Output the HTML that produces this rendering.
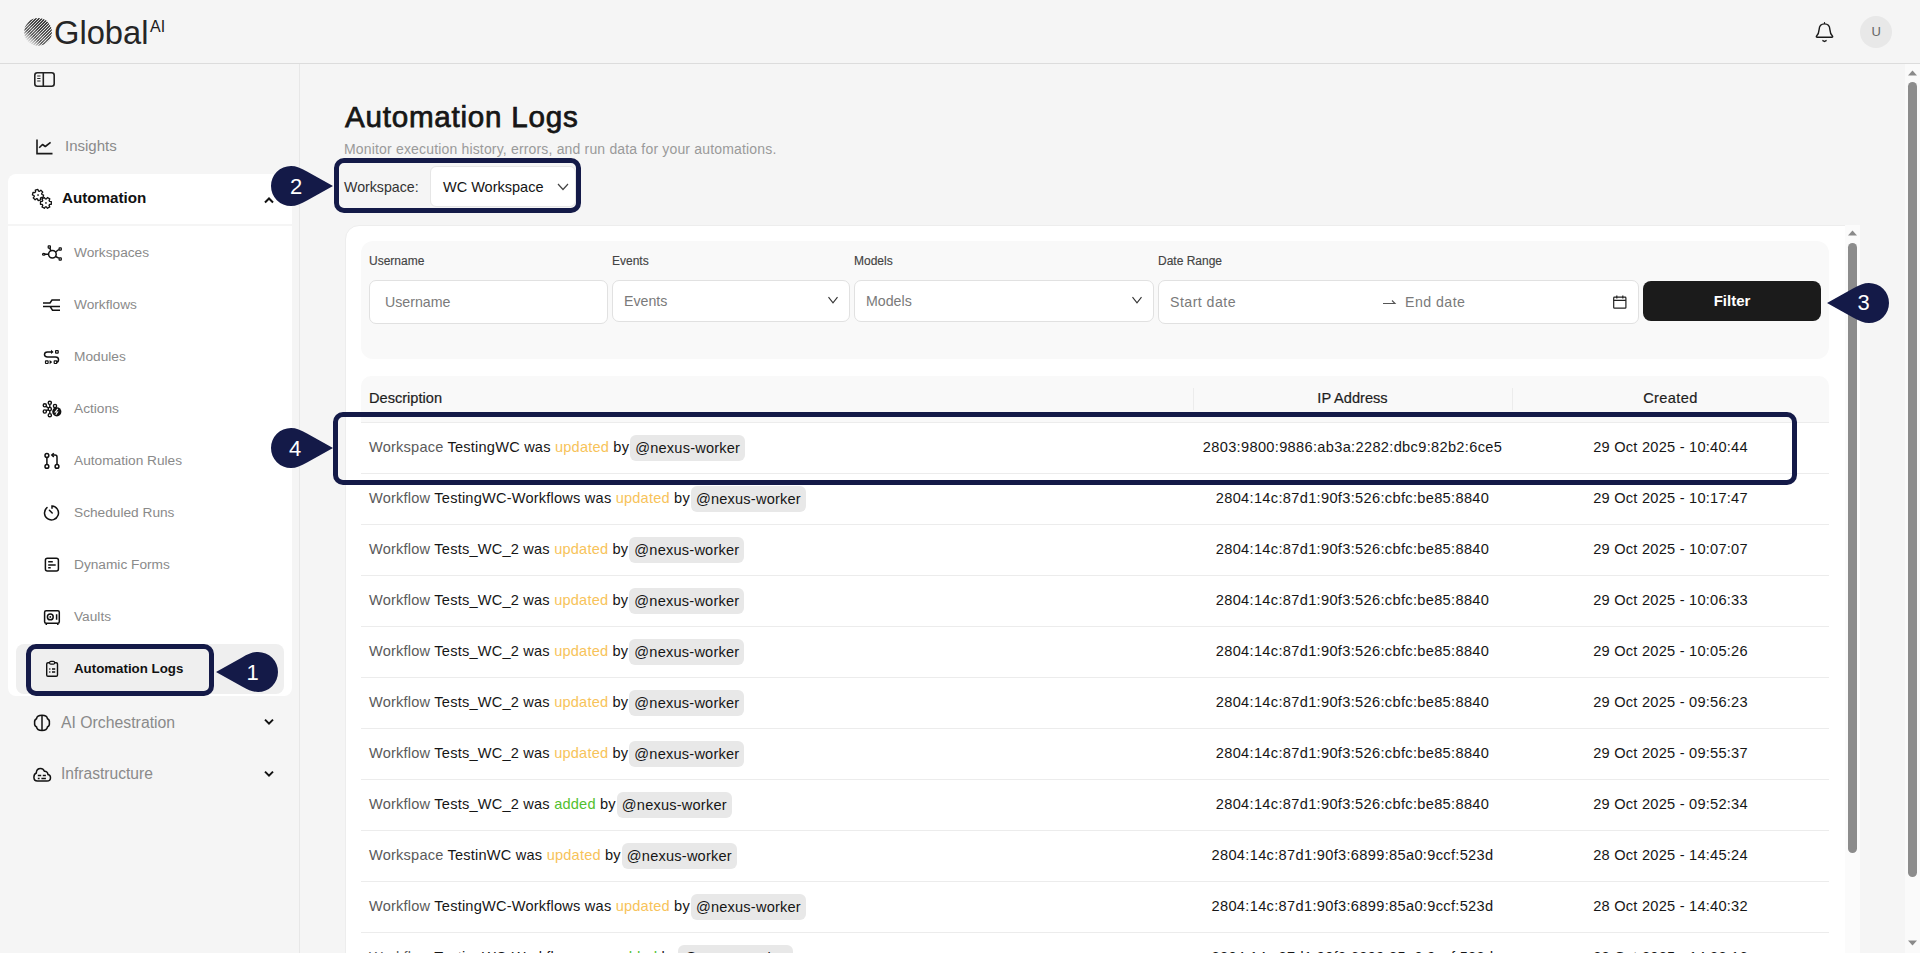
<!DOCTYPE html>
<html><head><meta charset="utf-8">
<style>
*{box-sizing:border-box;margin:0;padding:0}
html,body{width:1920px;height:953px;overflow:hidden;background:#f5f5f5;font-family:"Liberation Sans",sans-serif;color:#111}
.t{position:absolute;white-space:nowrap;line-height:1}
#hdr{position:absolute;left:0;top:0;width:1920px;height:64px;border-bottom:1px solid #dcdcdc}
#side{position:absolute;left:0;top:64px;width:300px;height:889px;border-right:1px solid #e7e7e7}
.bx{position:absolute}
.ann{position:absolute;border:5px solid #141a48;border-radius:10px;z-index:5}
.bdg{z-index:6}
.bnum{z-index:7}
svg{position:absolute;overflow:visible}
.si{font-size:13.7px;color:#8a8a8a}
.sm{font-size:15.5px;color:#8a8a8a}
.fl{font-size:12px;color:#444;-webkit-text-stroke:0.15px #444}
.inp{background:#fff;border:1px solid #e1e1e1;border-radius:7px}
.ph{font-size:14.2px;color:#7a7a7a}
.th{font-size:14.6px;color:#1e1e1e;-webkit-text-stroke:0.2px #1e1e1e}
.row{position:absolute;left:361px;width:1468px;height:51px;border-bottom:1px solid #ececec}
.desc{position:absolute;left:8px;top:-1px;height:51px;line-height:51px;font-size:14.6px;letter-spacing:0.2px;color:#161616;white-space:nowrap}
.desc .g{color:#5a5a5a}
.desc .up{color:#f7c35a}
.desc .ad{color:#52bf2e}
.pill{display:inline-block;background:#e8e8e8;border-radius:6px;height:26px;line-height:26px;padding:0 5px;margin-left:1px;vertical-align:middle;position:relative;top:0px}
.ip{position:absolute;left:832px;width:319px;top:-1px;height:51px;line-height:51px;text-align:center;font-size:14.6px;letter-spacing:0.33px;color:#161616;white-space:nowrap}
.dt{position:absolute;left:1151px;width:317px;top:-1px;height:51px;line-height:51px;text-align:center;font-size:14.6px;letter-spacing:0.24px;color:#161616;white-space:nowrap}
</style></head>
<body>
<div id="hdr"></div>
<div id="side"></div>

<!-- logo -->
<svg style="left:23.5px;top:17.5px" width="28" height="28" viewBox="0 0 28 28">
  <defs><clipPath id="gc"><circle cx="14" cy="14" r="13.9"/></clipPath>
  <linearGradient id="gg" gradientUnits="userSpaceOnUse" x1="22" y1="5" x2="5" y2="24"><stop offset="0" stop-color="#111"/><stop offset="0.4" stop-color="#1e1e1e"/><stop offset="0.55" stop-color="#555"/><stop offset="0.7" stop-color="#333"/><stop offset="0.85" stop-color="#999"/><stop offset="1" stop-color="#dcdcdc"/></linearGradient></defs>
  <g clip-path="url(#gc)" stroke="url(#gg)" stroke-width="1.15">
    <path d="M0.50 0L0 0.50 M3.50 0L0 3.50 M6.50 0L0 6.50 M9.50 0L0 9.50 M12.50 0L0 12.50 M15.50 0L0 15.50 M18.50 0L0 18.50 M21.50 0L0 21.50 M24.50 0L0 24.50 M27.50 0L0 27.50 M30.50 0L0 30.50 M33.50 0L0 33.50 M36.50 0L0 36.50 M39.50 0L0 39.50 M42.50 0L0 42.50 M45.50 0L0 45.50 M48.50 0L0 48.50 M51.50 0L0 51.50 M54.50 0L0 54.50"/>
  </g>
</svg>
<div class="t" style="left:54px;top:17px;font-size:32.7px;color:#262626">Global</div>
<div class="t" style="left:150px;top:19px;font-size:16px;color:#1c1c1c">AI</div>

<!-- bell -->
<svg style="left:1815px;top:21px" width="19" height="22" viewBox="0 0 19 22">
  <path d="M9.5 2.9C6.2 2.9 4.3 5.3 4.1 8.6C3.9 11.6 3.7 12.9 1.6 15C1 15.7 1.4 16.3 2.2 16.3H16.8C17.6 16.3 18 15.7 17.4 15C15.3 12.9 15.1 11.6 14.9 8.6C14.7 5.3 12.8 2.9 9.5 2.9Z" fill="none" stroke="#1a1a1a" stroke-width="1.4"/>
  <path d="M7.4 19.3L9.5 20.5L11.6 19.3" fill="none" stroke="#1a1a1a" stroke-width="1.4"/>
  <path d="M9.5 1.1L9.5 3" stroke="#1a1a1a" stroke-width="1.1"/>
</svg>
<div class="bx" style="left:1860px;top:16px;width:32px;height:32px;border-radius:50%;background:#e8e8e8"></div>
<div class="t" style="left:1871.5px;top:25px;font-size:13px;color:#666">U</div>

<!-- sidebar toggle -->
<svg style="left:34px;top:72px" width="21" height="15" viewBox="0 0 21 15">
  <rect x="0.8" y="0.8" width="19.4" height="13.4" rx="2.5" fill="none" stroke="#222" stroke-width="1.6"/>
  <path d="M9.3 1V14" stroke="#222" stroke-width="1.6"/>
  <path d="M3.2 4H6.5M3.2 6.5H6.5M3.2 9H6.5" stroke="#222" stroke-width="1.1"/>
</svg>

<!-- insights -->
<svg style="left:36px;top:139px" width="17" height="16" viewBox="0 0 17 16">
  <path d="M1 0.5V14.6H16.5" fill="none" stroke="#1a1a1a" stroke-width="1.6"/>
  <path d="M3.2 8.8L6.5 5.5L9.3 7.5L14.6 3.4" fill="none" stroke="#1a1a1a" stroke-width="1.6" stroke-linejoin="round"/>
</svg>
<div class="t sm" style="left:65px;top:137.8px;font-size:15px">Insights</div>

<!-- automation group -->
<div class="bx" style="left:8px;top:174px;width:284px;height:50px;background:#fff;border-radius:8px 8px 0 0"></div>
<div class="bx" style="left:8px;top:226px;width:284px;height:470px;background:#fff;border-radius:0 0 8px 8px"></div>
<svg style="left:28px;top:185px" width="28" height="28" viewBox="28 185 28 28">
  <g fill="none" stroke="#111" stroke-width="1.3" stroke-linejoin="round">
  <path d="M43.60 195.10 L42.90 197.71 L41.19 197.41 L40.41 198.19 L40.71 199.90 L38.10 200.60 L37.51 198.97 L36.44 198.68 L35.12 199.80 L33.20 197.88 L34.32 196.56 L34.03 195.49 L32.40 194.90 L33.10 192.29 L34.81 192.59 L35.59 191.81 L35.29 190.10 L37.90 189.40 L38.49 191.03 L39.56 191.32 L40.88 190.20 L42.80 192.12 L41.68 193.44 L41.97 194.51Z"/>
  <path d="M51.33 201.55 L51.33 204.25 L49.61 204.40 L49.05 205.36 L49.79 206.93 L47.44 208.28 L46.46 206.86 L45.34 206.86 L44.36 208.28 L42.01 206.93 L42.75 205.36 L42.19 204.40 L40.47 204.25 L40.47 201.55 L42.19 201.40 L42.75 200.44 L42.01 198.87 L44.36 197.52 L45.34 198.94 L46.46 198.94 L47.44 197.52 L49.79 198.87 L49.05 200.44 L49.61 201.40Z"/>
  </g>
  <rect x="37.3" y="194.3" width="1.5" height="1.5" fill="#111"/>
  <rect x="45.2" y="202.2" width="1.5" height="1.5" fill="#111"/>
</svg>
<div class="t" style="left:62px;top:190px;font-size:15.2px;font-weight:bold;color:#111">Automation</div>
<svg style="left:264px;top:197px" width="10" height="7" viewBox="0 0 10 7"><path d="M1 5.5L5 1.5L9 5.5" fill="none" stroke="#111" stroke-width="2"/></svg>

<!-- submenu icons -->
<svg style="left:42px;top:245px" width="20" height="16" viewBox="42 245 20 16">
  <g fill="none" stroke="#111" stroke-width="1.5">
    <circle cx="52.4" cy="254.3" r="3.8"/>
    <path d="M44.5 254.3H48.6M49.8 247.8L50.8 251M58.8 249.5L55.6 252M58.8 258.2L55.6 256.5"/>
  </g><g fill="none" stroke="#111" stroke-width="1.2">
    <rect x="48.2" y="245.9" width="2.2" height="2.2" rx="0.4"/>
    <rect x="59.1" y="247.9" width="2.2" height="2.2" rx="0.4"/>
    <rect x="59.1" y="257.9" width="2.2" height="2.2" rx="0.4"/>
    <ellipse cx="43.8" cy="254.3" rx="1.3" ry="0.9"/>
  </g>
</svg>
<div class="t si" style="left:74px;top:246px">Workspaces</div>

<svg style="left:42px;top:298px" width="20" height="14" viewBox="42 298 20 14">
  <g fill="none" stroke="#111" stroke-width="1.5">
    <path d="M43 303H50L52 300H60M43 306.4H60M50 306.4L52.5 310.2H60"/>
  </g>
</svg>
<div class="t si" style="left:74px;top:298px">Workflows</div>

<svg style="left:43px;top:349px" width="18" height="17" viewBox="43 349 18 17">
  <g fill="none" stroke="#111" stroke-width="1.5">
    <path d="M51.5 351.9H47.5C45 351.9 44.5 353.5 44.5 354.5C44.5 356 45.5 356.9 47.5 356.9H55.5C57.5 356.9 58.5 358 58.5 359.5C58.5 361 57.5 362.3 56.3 362.3"/>
  </g><g fill="none" stroke="#111" stroke-width="1.2">
    <rect x="55.6" y="350.6" width="2.6" height="2.6" rx="0.4"/>
    <rect x="45.5" y="360.9" width="2.6" height="2.6" rx="0.4"/>
    <rect x="54.2" y="360.9" width="2.6" height="2.6" rx="0.4"/>
  </g>
  <path d="M51 349.8L53.6 351.9L51 354Z M49.6 360L52.2 362.1L49.6 364.2Z" fill="#111"/>
</svg>
<div class="t si" style="left:74px;top:350px">Modules</div>

<svg style="left:42px;top:400px" width="20" height="18" viewBox="42 400 20 18">
  <g fill="none" stroke="#111" stroke-width="1.4">
    <circle cx="49.8" cy="402.8" r="1.6"/>
    <circle cx="44.8" cy="405.3" r="1.6"/>
    <circle cx="44.8" cy="411.5" r="1.6"/>
    <circle cx="49.8" cy="409" r="1.6"/>
    <circle cx="49.8" cy="415.2" r="1.6"/>
    <circle cx="55" cy="406" r="1.6"/>
    <path d="M49.8 404.4V407.4M49.8 410.6V413.6M46 406.3L48.5 408M46 410.5L48.5 409.8"/>
  </g>
  <circle cx="56.8" cy="411.8" r="4.6" fill="#111"/>
  <path d="M57.8 408.8L55.3 412H57.6L55.8 414.8" fill="none" stroke="#fff" stroke-width="1.1"/>
</svg>
<div class="t si" style="left:74px;top:402px">Actions</div>

<svg style="left:43px;top:451px" width="18" height="19" viewBox="43 451 18 19">
  <g fill="none" stroke="#111" stroke-width="1.5">
    <circle cx="46.9" cy="455.5" r="1.9"/>
    <circle cx="46.9" cy="466.4" r="1.9"/>
    <circle cx="57" cy="466.4" r="1.9"/>
    <path d="M46.9 457.4V464.5M57 464.5V457C57 455.7 56.3 455.1 55 455.1H52.2"/>
    <path d="M53.8 453.2L51.8 455.1L53.8 457"/>
  </g>
</svg>
<div class="t si" style="left:74px;top:454px">Automation Rules</div>

<svg style="left:44px;top:505px" width="16" height="16" viewBox="44 505 16 16">
  <g fill="none" stroke="#111" stroke-width="1.5" stroke-linecap="round">
    <path d="M47 507.6A7 7 0 1 0 52 506V508.3"/>
    <path d="M49.4 510.2L52.2 513"/>
  </g>
</svg>
<div class="t si" style="left:74px;top:506px">Scheduled Runs</div>

<svg style="left:44px;top:557px" width="16" height="16" viewBox="44 557 16 16">
  <rect x="45.4" y="558.3" width="13" height="12.8" rx="2" fill="none" stroke="#111" stroke-width="1.5"/>
  <path d="M48.2 561.8H52.8M48.2 565H55.7M48.2 567.8H50.7" stroke="#111" stroke-width="1.4"/>
</svg>
<div class="t si" style="left:74px;top:558px">Dynamic Forms</div>

<svg style="left:43px;top:609px" width="18" height="17" viewBox="43 609 18 17">
  <rect x="44.6" y="610.7" width="14.7" height="12.6" rx="1.5" fill="none" stroke="#111" stroke-width="1.5"/>
  <circle cx="50.3" cy="616.9" r="2.9" fill="none" stroke="#111" stroke-width="1.5"/><circle cx="50.3" cy="616.9" r="0.9" fill="#111"/>
  <path d="M56.6 614.2V619.8M46.3 623.5V625M57.8 623.5V625" stroke="#111" stroke-width="1.5"/>
</svg>
<div class="t si" style="left:74px;top:610px">Vaults</div>

<!-- active -->
<div class="bx" style="left:16px;top:644px;width:268px;height:50px;background:#efefef;border-radius:8px"></div>
<svg style="left:45px;top:660px" width="14" height="18" viewBox="45 660 14 18">
  <rect x="46.7" y="662.7" width="10.8" height="13.6" rx="1.3" fill="none" stroke="#111" stroke-width="1.4"/>
  <rect x="49.6" y="661.4" width="5" height="2.8" rx="1.2" fill="#efefef" stroke="#111" stroke-width="1.2"/>
  <path d="M49.2 669H50.4M52 669H55.2M49.2 672H50.4M52 672H55.2" stroke="#111" stroke-width="1.3"/>
</svg>
<div class="t" style="left:74px;top:662px;font-size:13.3px;font-weight:bold;color:#111">Automation Logs</div>

<svg style="left:33px;top:714px" width="18" height="18" viewBox="33 714 18 18">
  <g fill="none" stroke="#111" stroke-width="1.5">
    <path d="M42 715.3C38.5 715.3 36.8 716.8 36.5 718.8C35 719.4 34.4 721 34.6 722.8C34.4 724.6 35 726.3 36.5 726.9C36.8 729 38.5 730.5 42 730.5C45.5 730.5 47.2 729 47.5 726.9C49 726.3 49.6 724.6 49.4 722.8C49.6 721 49 719.4 47.5 718.8C47.2 716.8 45.5 715.3 42 715.3Z"/>
    <path d="M42 715.3V730.5"/>
  </g>
</svg>
<div class="t sm" style="left:61px;top:714.5px;font-size:15.8px">AI Orchestration</div>
<svg style="left:264px;top:718px" width="10" height="8" viewBox="0 0 10 8"><path d="M1 1.6L5 5.6L9 1.6" fill="none" stroke="#111" stroke-width="2"/></svg>

<svg style="left:33px;top:767px" width="19" height="16" viewBox="33 767 19 16">
  <g fill="none" stroke="#111" stroke-width="1.5">
    <path d="M37.5 781.1H47C49.2 781.1 50.5 779.7 50.5 777.8C50.5 776.2 49.5 774.9 48 774.6C47.8 772.3 46.2 771 44.4 771.2C43.6 769.5 42.2 768.6 40.6 768.6C38.2 768.6 36.4 770.5 36.3 773C34.8 773.6 33.9 775.3 33.9 777.3C33.9 779.5 35.4 781.1 37.5 781.1Z"/>
    <path d="M37.8 775.6H41.2M42.8 775.6H45.9M37.8 778.5H39.6M41.4 778.5H45.9"/>
  </g>
</svg>
<div class="t sm" style="left:61px;top:766px;font-size:15.6px">Infrastructure</div>
<svg style="left:264px;top:770px" width="10" height="8" viewBox="0 0 10 8"><path d="M1 1.6L5 5.6L9 1.6" fill="none" stroke="#111" stroke-width="2"/></svg>

<!-- MAIN -->
<!-- title -->
<div class="t" style="left:345px;top:102px;font-size:29.6px;letter-spacing:0.76px;font-weight:normal;-webkit-text-stroke:0.75px #161616;color:#161616">Automation Logs</div>
<div class="t" style="left:344px;top:142px;font-size:14px;letter-spacing:0.17px;color:#9a9a9a">Monitor execution history, errors, and run data for your automations.</div>
<div class="t" style="left:344px;top:180px;font-size:14.2px;color:#333">Workspace:</div>
<div class="bx" style="left:430px;top:166px;width:146px;height:41px;background:#fff;border:1px solid #e6e6e6;border-radius:6px"></div>
<div class="t" style="left:443px;top:180px;font-size:14.5px;color:#141414">WC Workspace</div>
<svg style="left:557px;top:183px" width="12" height="8" viewBox="0 0 12 8"><path d="M1 1L6 6.5L11 1" fill="none" stroke="#444" stroke-width="1.2"/></svg>
<div class="ann" style="left:334px;top:158px;width:247px;height:55px"></div>
<!-- badge 2 -->
<svg class="bdg" style="left:271px;top:166px" width="63" height="40" viewBox="0 0 63 40"><path d="M20 0C25 0 30 2 36 5.5L62 20L36 34.5C30 38 25 40 20 40A20 20 0 0 1 20 0Z" fill="#141a48"/></svg>
<div class="t" style="left:284px;top:176px;width:24px;text-align:center;font-size:22px;color:#fff;z-index:7">2</div>

<!-- card -->
<div class="bx" style="left:345px;top:225px;width:1515px;height:760px;background:#fff;border:1px solid #ededed;border-radius:14px"></div>
<!-- filter panel -->
<div class="bx" style="left:361px;top:241px;width:1468px;height:118px;background:#f9f9f9;border-radius:12px"></div>
<div class="t fl" style="left:369px;top:255px">Username</div>
<div class="t fl" style="left:612px;top:255px">Events</div>
<div class="t fl" style="left:854px;top:255px">Models</div>
<div class="t fl" style="left:1158px;top:255px">Date Range</div>

<div class="bx inp" style="left:369px;top:280px;width:239px;height:44px"></div>
<div class="t ph" style="left:385px;top:295px">Username</div>
<div class="bx inp" style="left:612px;top:280px;width:238px;height:42px"></div>
<div class="t ph" style="left:624px;top:294px">Events</div>
<svg style="left:827px;top:296px" width="12" height="9" viewBox="0 0 12 9"><path d="M1.5 1.2L6 6.8L10.5 1.2" fill="none" stroke="#333" stroke-width="1.15"/></svg>
<div class="bx inp" style="left:854px;top:280px;width:300px;height:42px"></div>
<div class="t ph" style="left:866px;top:294px">Models</div>
<svg style="left:1131px;top:296px" width="12" height="9" viewBox="0 0 12 9"><path d="M1.5 1.2L6 6.8L10.5 1.2" fill="none" stroke="#333" stroke-width="1.15"/></svg>
<div class="bx inp" style="left:1158px;top:280px;width:481px;height:44px"></div>
<div class="t ph" style="left:1170px;top:295px;letter-spacing:0.45px">Start date</div>
<svg style="left:1382px;top:299px" width="14" height="6" viewBox="0 0 14 6"><path d="M1 4.5H13L10 1.5" fill="none" stroke="#555" stroke-width="1.1"/></svg>
<div class="t ph" style="left:1405px;top:295px;letter-spacing:0.45px">End date</div>
<svg style="left:1613px;top:295px" width="14" height="14" viewBox="0 0 14 14">
  <rect x="0.7" y="2.2" width="12.2" height="11" rx="0.8" fill="none" stroke="#222" stroke-width="1.2"/>
  <path d="M0.7 5.3H12.9M3.8 0.5V3.5M9.8 0.5V3.5" stroke="#222" stroke-width="1.2"/>
</svg>
<div class="bx" style="left:1643px;top:281px;width:178px;height:40px;background:#1b1b1b;border-radius:8px"></div>
<div class="t" style="left:1643px;top:293px;width:178px;text-align:center;font-size:15px;font-weight:bold;color:#fff">Filter</div>
<!-- badge 3 -->
<svg class="bdg" style="left:1826px;top:283px" width="63" height="40" viewBox="0 0 63 40"><path d="M43 0C38 0 33 2 27 5.5L1 20L27 34.5C33 38 38 40 43 40A20 20 0 0 0 43 0Z" fill="#141a48"/></svg>
<div class="t" style="left:1851.5px;top:292px;width:24px;text-align:center;font-size:22px;color:#fff;z-index:7">3</div>

<!-- table header -->
<div class="bx" style="left:361px;top:376px;width:1468px;height:47px;background:#f9f9f9;border-radius:10px 10px 0 0;border-bottom:1px solid #ececec"></div>
<div class="bx" style="left:1193px;top:388px;width:1px;height:22px;background:#ececec"></div>
<div class="bx" style="left:1512px;top:388px;width:1px;height:22px;background:#ececec"></div>
<div class="t th" style="left:369px;top:391px">Description</div>
<div class="t th" style="left:1193px;top:391px;width:319px;text-align:center">IP Address</div>
<div class="t th" style="left:1512px;top:391px;width:317px;text-align:center;letter-spacing:0.4px">Created</div>

<div class="row" style="top:423px"><div class="desc"><span class="g">Workspace</span> TestingWC was <span class="up">updated</span> by<span class="pill">@nexus-worker</span></div><div class="ip">2803:9800:9886:ab3a:2282:dbc9:82b2:6ce5</div><div class="dt">29 Oct 2025 - 10:40:44</div></div>
<div class="row" style="top:474px"><div class="desc"><span class="g">Workflow</span> TestingWC-Workflows was <span class="up">updated</span> by<span class="pill">@nexus-worker</span></div><div class="ip">2804:14c:87d1:90f3:526:cbfc:be85:8840</div><div class="dt">29 Oct 2025 - 10:17:47</div></div>
<div class="row" style="top:525px"><div class="desc"><span class="g">Workflow</span> Tests_WC_2 was <span class="up">updated</span> by<span class="pill">@nexus-worker</span></div><div class="ip">2804:14c:87d1:90f3:526:cbfc:be85:8840</div><div class="dt">29 Oct 2025 - 10:07:07</div></div>
<div class="row" style="top:576px"><div class="desc"><span class="g">Workflow</span> Tests_WC_2 was <span class="up">updated</span> by<span class="pill">@nexus-worker</span></div><div class="ip">2804:14c:87d1:90f3:526:cbfc:be85:8840</div><div class="dt">29 Oct 2025 - 10:06:33</div></div>
<div class="row" style="top:627px"><div class="desc"><span class="g">Workflow</span> Tests_WC_2 was <span class="up">updated</span> by<span class="pill">@nexus-worker</span></div><div class="ip">2804:14c:87d1:90f3:526:cbfc:be85:8840</div><div class="dt">29 Oct 2025 - 10:05:26</div></div>
<div class="row" style="top:678px"><div class="desc"><span class="g">Workflow</span> Tests_WC_2 was <span class="up">updated</span> by<span class="pill">@nexus-worker</span></div><div class="ip">2804:14c:87d1:90f3:526:cbfc:be85:8840</div><div class="dt">29 Oct 2025 - 09:56:23</div></div>
<div class="row" style="top:729px"><div class="desc"><span class="g">Workflow</span> Tests_WC_2 was <span class="up">updated</span> by<span class="pill">@nexus-worker</span></div><div class="ip">2804:14c:87d1:90f3:526:cbfc:be85:8840</div><div class="dt">29 Oct 2025 - 09:55:37</div></div>
<div class="row" style="top:780px"><div class="desc"><span class="g">Workflow</span> Tests_WC_2 was <span class="ad">added</span> by<span class="pill">@nexus-worker</span></div><div class="ip">2804:14c:87d1:90f3:526:cbfc:be85:8840</div><div class="dt">29 Oct 2025 - 09:52:34</div></div>
<div class="row" style="top:831px"><div class="desc"><span class="g">Workspace</span> TestinWC was <span class="up">updated</span> by<span class="pill">@nexus-worker</span></div><div class="ip">2804:14c:87d1:90f3:6899:85a0:9ccf:523d</div><div class="dt">28 Oct 2025 - 14:45:24</div></div>
<div class="row" style="top:882px"><div class="desc"><span class="g">Workflow</span> TestingWC-Workflows was <span class="up">updated</span> by<span class="pill">@nexus-worker</span></div><div class="ip">2804:14c:87d1:90f3:6899:85a0:9ccf:523d</div><div class="dt">28 Oct 2025 - 14:40:32</div></div>
<div class="row" style="top:933px"><div class="desc"><span class="g">Workflow</span> TestingWC-Workflows was <span class="ad">added</span> by<span class="pill">@nexus-worker</span></div><div class="ip">2804:14c:87d1:90f3:6899:85a0:9ccf:523d</div><div class="dt">28 Oct 2025 - 14:38:16</div></div>

<!-- annotation 4 -->
<div class="ann" style="left:333px;top:412px;width:1464px;height:73px"></div>
<svg class="bdg" style="left:271px;top:428px" width="63" height="40" viewBox="0 0 63 40"><path d="M20 0C25 0 30 2 36 5.5L62 20L36 34.5C30 38 25 40 20 40A20 20 0 0 1 20 0Z" fill="#141a48"/></svg>
<div class="t" style="left:283px;top:438px;width:24px;text-align:center;font-size:22px;color:#fff;z-index:7">4</div>

<!-- annotation 1 -->
<div class="ann" style="left:26px;top:644px;width:188px;height:52px"></div>
<svg class="bdg" style="left:216px;top:652px" width="62" height="40" viewBox="0 0 62 40"><path d="M42 0C37 0 32 2 26 5.5L0 20L26 34.5C32 38 37 40 42 40A20 20 0 0 0 42 0Z" fill="#141a48"/></svg>
<div class="t" style="left:240.5px;top:662px;width:24px;text-align:center;font-size:22px;color:#fff;z-index:7">1</div>

<!-- inner scrollbar -->
<div class="bx" style="left:1845px;top:225px;width:15px;height:728px;background:#fbfbfb"></div>
<svg style="left:1848px;top:230px" width="9" height="6" viewBox="0 0 9 6"><path d="M0 5.5L4.5 0.5L9 5.5Z" fill="#8a8a8a"/></svg>
<div class="bx" style="left:1848px;top:243px;width:9px;height:610px;background:#8c8c8c;border-radius:5px"></div>
<!-- page scrollbar -->
<div class="bx" style="left:1905px;top:64px;width:15px;height:889px;background:#fafafa"></div>
<svg style="left:1908px;top:70px" width="9" height="6" viewBox="0 0 9 6"><path d="M0 5.5L4.5 0.5L9 5.5Z" fill="#8a8a8a"/></svg>
<div class="bx" style="left:1908px;top:82px;width:9px;height:795px;background:#8c8c8c;border-radius:5px"></div>
<svg style="left:1908px;top:940px" width="9" height="6" viewBox="0 0 9 6"><path d="M0 0.5L4.5 5.5L9 0.5Z" fill="#8a8a8a"/></svg>


</body></html>
